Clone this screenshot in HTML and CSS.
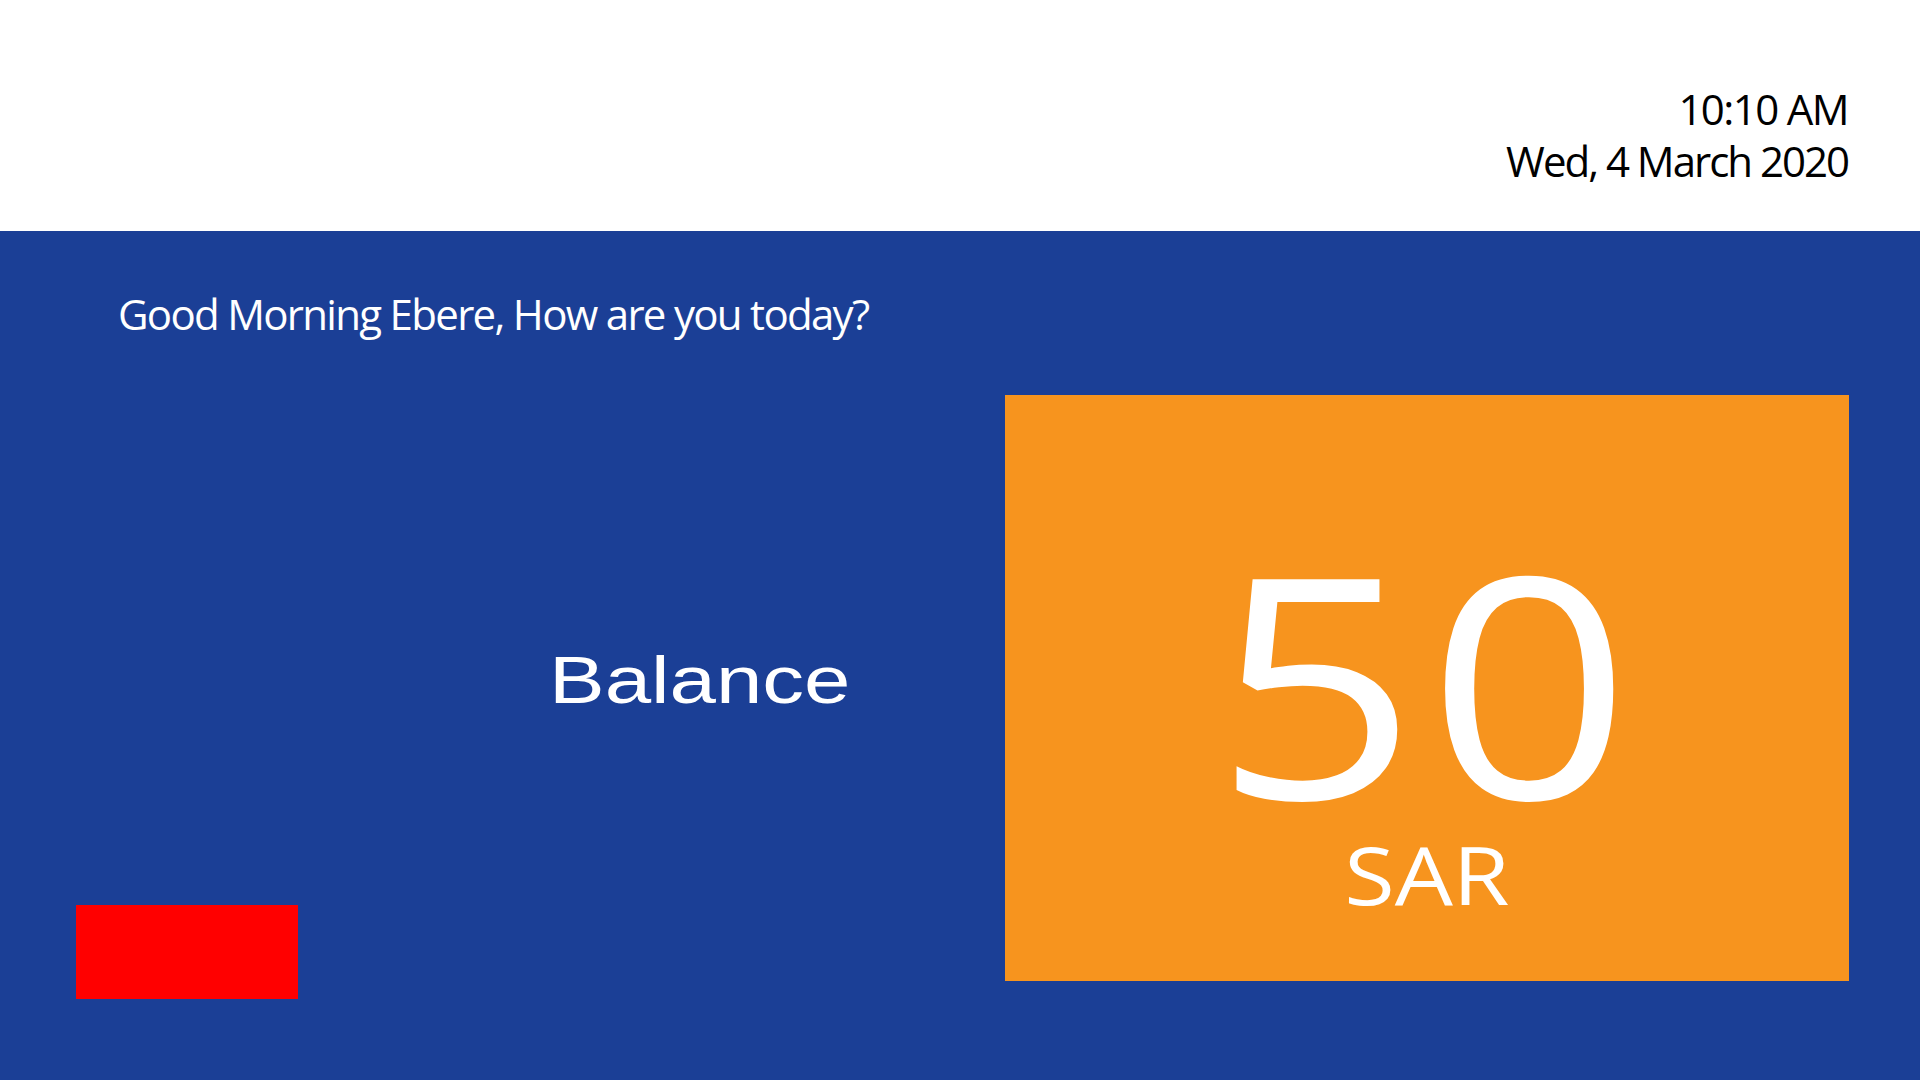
FILE: index.html
```html
<!DOCTYPE html>
<html lang="en">
<head>
<meta charset="utf-8">
<title>Balance</title>
<link rel="stylesheet" href="styles.css">
</head>
<body>
  <header class="topbar">
    <div class="clock">
      <div class="clock-time">10:10 AM</div>
      <div class="clock-date">Wed, 4 March 2020</div>
    </div>
  </header>
  <main class="main">
    <p class="greeting">Good Morning Ebere, How are you today?</p>
    <div class="content">
      <div class="left">
        <div class="balance-label">Balance</div>
        <div class="red-btn"></div>
      </div>
      <div class="card">
        <div class="amount">50</div>
        <div class="currency">SAR</div>
      </div>
    </div>
  </main>
</body>
</html>
```
FILE: styles.css
```css
html, body {
  margin: 0;
  padding: 0;
}
body {
  width: 1920px;
  height: 1080px;
  overflow: hidden;
  font-family: "Open Sans", "Noto Sans", sans-serif;
  background: #1b3f96;
}
.topbar {
  height: 231px;
  background: #ffffff;
  box-sizing: border-box;
  padding: 83px 72px 0 0;
  display: flex;
  justify-content: flex-end;
}
.clock {
  text-align: right;
  color: #000;
  font-size: 42px;
  line-height: 52px;
}
.clock-time {
  letter-spacing: -1.6px;
}
.clock-date {
  letter-spacing: -2px;
}
.main {
  height: 849px;
  box-sizing: border-box;
  padding: 0 71px 0 76px;
  background: #1b3f96;
  overflow: hidden;
}
.greeting {
  margin: 57px 0 0 42px;
  color: #fff;
  font-size: 42px;
  line-height: 52px;
  letter-spacing: -1.7px;
}
.content {
  margin-top: 55px;
  display: flex;
  align-items: flex-start;
  justify-content: space-between;
}
.left {
  display: flex;
  flex-direction: column;
  align-items: flex-start;
}
.balance-label {
  margin: 246px 0 0 473px;
  font-family: "Liberation Sans", Arial, sans-serif;
  font-size: 67px;
  line-height: 77px;
  color: #fff;
  transform: scaleX(1.245);
  transform-origin: left center;
}
.red-btn {
  margin-top: 187px;
  width: 222px;
  height: 94px;
  background: #ff0000;
}
.card {
  width: 844px;
  height: 586px;
  background: #f7941e;
  display: flex;
  flex-direction: column;
  align-items: center;
  color: #fff;
}
.amount {
  margin-top: 131px;
  font-size: 308px;
  line-height: 308px;
  letter-spacing: 8px;
  transform: scaleX(1.16);
}
.currency {
  margin-top: 0;
  font-size: 80px;
  line-height: 80px;
  transform: scaleX(1.15);
}
```
